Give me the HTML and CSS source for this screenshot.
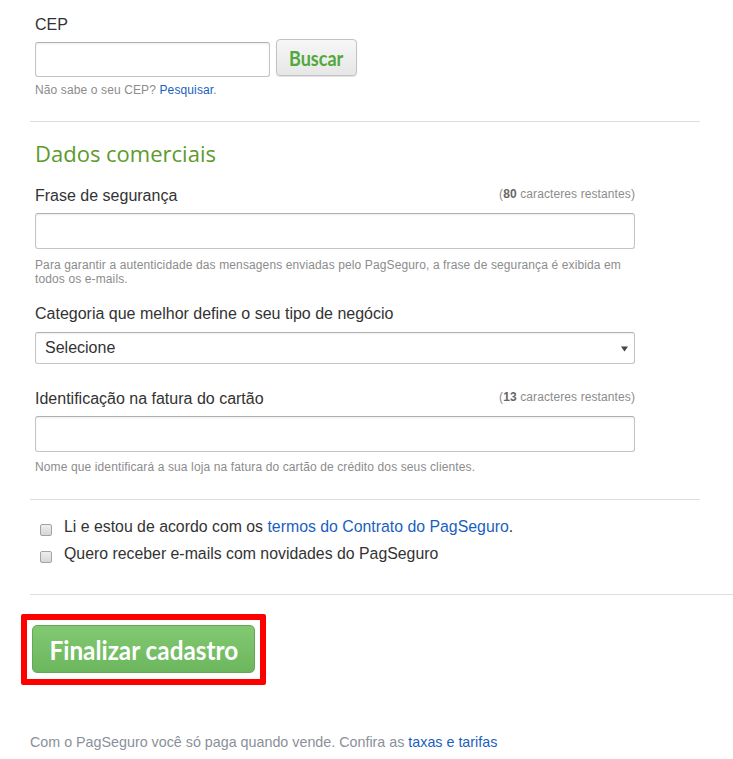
FILE: index.html
```html
<!DOCTYPE html>
<html lang="pt-BR">
<head>
<meta charset="utf-8">
<title>Cadastro PagSeguro</title>
<link rel="stylesheet" href="styles.css">
</head>
<body>
<div class="page">
  <div class="field-block">
    <div class="label label-cep">CEP</div>
    <div class="cep-row">
      <input class="input input-cep" type="text">
      <button class="btn-buscar" type="button"><span class="cond">Buscar</span></button>
    </div>
    <div class="hint hint-cep">Não sabe o seu CEP? <a class="link" href="#">Pesquisar</a>.</div>
  </div>

  <hr class="divider divider-1">

  <h2 class="section-title">Dados comerciais</h2>

  <div class="field-block">
    <div class="label-row label-row-frase">
      <span class="label">Frase de segurança</span>
      <span class="counter">(<b>80</b> caracteres restantes)</span>
    </div>
    <input class="input input-wide input-frase" type="text">
    <div class="hint hint-frase">Para garantir a autenticidade das mensagens enviadas pelo PagSeguro, a frase de segurança é exibida em todos os e-mails.</div>
  </div>

  <div class="field-block">
    <div class="label label-cat">Categoria que melhor define o seu tipo de negócio</div>
    <div class="select">
      <span>Selecione</span>
      <svg class="caret" width="7" height="6" viewBox="0 0 7 6"><path d="M0 0.5 H7 L3.5 5.5 Z" fill="#444"/></svg>
    </div>
  </div>

  <div class="field-block">
    <div class="label-row label-row-ident">
      <span class="label">Identificação na fatura do cartão</span>
      <span class="counter">(<b>13</b> caracteres restantes)</span>
    </div>
    <input class="input input-wide input-ident" type="text">
    <div class="hint hint-ident">Nome que identificará a sua loja na fatura do cartão de crédito dos seus clientes.</div>
  </div>

  <hr class="divider divider-2">

  <div class="checks">
    <label class="check-row">
      <span class="checkbox"></span>
      <span>Li e estou de acordo com os <a class="link" href="#">termos do Contrato do PagSeguro</a>.</span>
    </label>
    <label class="check-row">
      <span class="checkbox"></span>
      <span>Quero receber e-mails com novidades do PagSeguro</span>
    </label>
  </div>

  <hr class="divider divider-3">

  <div class="highlight">
    <button class="btn-finalizar" type="button"><span class="cond">Finalizar cadastro</span></button>
  </div>

  <p class="footer">Com o PagSeguro você só paga quando vende. Confira as <a class="link" href="#">taxas e tarifas</a></p>
</div>
</body>
</html>
```

FILE: styles.css
```css
html, body {
  margin: 0;
  padding: 0;
  background: #ffffff;
}

body {
  font-family: "Liberation Sans", Arial, sans-serif;
  color: #333333;
  overflow: hidden;
}

.page {
  padding-left: 30px;
  width: 670px;
}

.field-block {
  padding-left: 5px;
  width: 600px;
}

.label {
  font-size: 16px;
  line-height: 18px;
  color: #333333;
}

.label-cep {
  padding-top: 16px;
}

.cep-row {
  display: flex;
  align-items: flex-start;
  margin-top: 5px;
}

.input {
  display: block;
  box-sizing: border-box;
  height: 35px;
  border: 1px solid #c4c4c4;
  border-top-color: #b0b0b0;
  border-radius: 3px;
  background: #ffffff;
  box-shadow: inset 0 1px 2px rgba(0, 0, 0, 0.08);
  padding: 0 8px;
  font-family: inherit;
  font-size: 15px;
  margin: 0;
}

.input-cep {
  width: 235px;
  margin-top: 3px;
}

.btn-buscar {
  margin-left: 6px;
  box-sizing: border-box;
  width: 81px;
  height: 37px;
  border: 1px solid #c2c2c2;
  border-radius: 4px;
  background: linear-gradient(#f7f7f7, #e6e6e6);
  box-shadow: 0 1px 1px rgba(0, 0, 0, 0.12);
  font-family: Lato, "Open Sans", sans-serif;
  font-weight: bold;
  font-size: 20px;
  color: #52a83c;
  padding: 0;
  display: flex;
  align-items: center;
  justify-content: center;
}

.cond {
  display: inline-block;
  transform: scaleX(0.9);
  white-space: nowrap;
}

.hint {
  font-size: 12px;
  letter-spacing: 0.12px;
  line-height: 14px;
  color: #8c8c8c;
}

.hint-cep {
  margin-top: 7px;
  line-height: 13px;
}

.link {
  color: #1a5fc0;
  text-decoration: none;
}

.divider {
  border: 0;
  height: 1px;
  background: #dedede;
  margin: 0;
}

.divider-1 {
  margin-top: 24px;
  width: 670px;
}

.section-title {
  margin: 17px 0 0 5px;
  font-family: "Open Sans", "Noto Sans", sans-serif;
  font-weight: normal;
  font-size: 22px;
  line-height: 28px;
  color: #5e9a2c;
}

.label-row {
  display: flex;
  justify-content: space-between;
  align-items: flex-start;
}

.label-row-frase {
  margin-top: 20px;
}

.counter {
  font-size: 12px;
  letter-spacing: 0.1px;
  line-height: 13px;
  color: #8c8c8c;
  margin-top: 1px;
}

.counter b {
  color: #666666;
}

.input-wide {
  width: 600px;
  height: 36px;
  margin-top: 8px;
}

.hint-frase {
  margin-top: 9px;
}

.label-cat {
  margin-top: 19px;
}

.select {
  box-sizing: border-box;
  margin-top: 9px;
  height: 32px;
  border: 1px solid #c4c4c4;
  border-top-color: #b0b0b0;
  border-radius: 3px;
  box-shadow: inset 0 1px 2px rgba(0, 0, 0, 0.06);
  padding: 0 6px 0 9px;
  display: flex;
  justify-content: space-between;
  align-items: center;
  font-size: 16px;
  color: #333333;
}

.caret {
  display: block;
  margin-top: 1px;
}

.label-row-ident {
  margin-top: 26px;
}

.hint-ident {
  margin-top: 8px;
}

.divider-2 {
  margin-top: 25px;
  width: 670px;
}

.checks {
  display: flex;
  flex-direction: column;
  gap: 7px;
  margin-top: 17px;
  padding-left: 10px;
}

.check-row {
  display: flex;
  align-items: flex-start;
  gap: 12px;
  font-size: 15.85px;
  line-height: 20px;
  color: #333333;
}

.checkbox {
  box-sizing: border-box;
  width: 12px;
  height: 12px;
  margin-top: 7px;
  border: 1px solid #a3a3a3;
  border-radius: 2px;
  background: linear-gradient(#eeeeee, #d6d6d6);
  flex-shrink: 0;
}

.divider-3 {
  margin-top: 30px;
  width: 703px;
}

.highlight {
  box-sizing: border-box;
  margin: 19px 0 0 -9px;
  width: 245px;
  height: 71px;
  border: 6px solid #ff0000;
  border-radius: 2px;
  padding: 5px 5px 6px 5px;
}

.btn-finalizar {
  box-sizing: border-box;
  width: 223px;
  height: 48px;
  border: 1px solid #62a855;
  border-radius: 5px;
  background: linear-gradient(#82ca72, #6cb65e);
  font-family: Lato, "Open Sans", sans-serif;
  font-weight: bold;
  font-size: 27px;
  color: #ffffff;
  padding: 0;
  display: flex;
  align-items: center;
  justify-content: center;
}

.footer {
  margin: 49px 0 0 0;
  font-size: 14.3px;
  line-height: 17px;
  color: #8a9099;
}
```
